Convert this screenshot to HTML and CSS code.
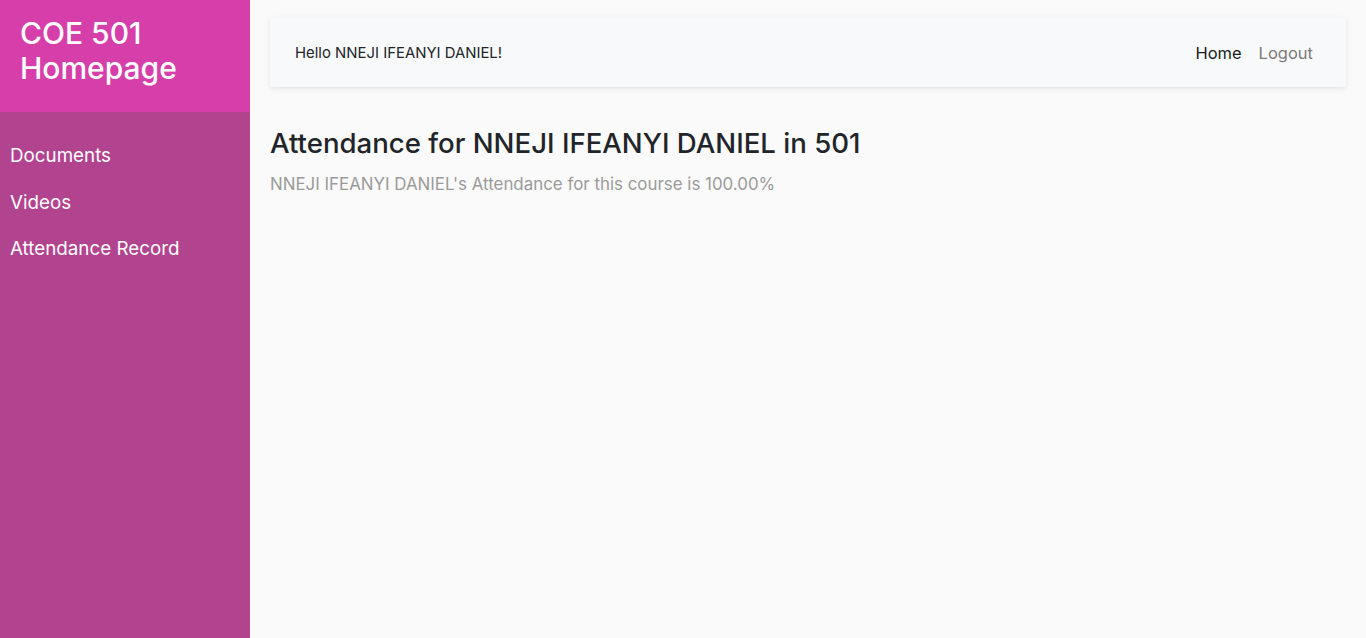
FILE: index.html
```html
<!DOCTYPE html>
<html lang="en">
<head>
<meta charset="utf-8">
<title>COE 501 Homepage</title>
<link rel="stylesheet" href="styles.css">
</head>
<body>
<div class="layout">
  <aside class="sidebar">
    <div class="brand">COE 501<br>Homepage</div>
    <ul class="side-nav">
      <li><a href="#">Documents</a></li>
      <li><a href="#">Videos</a></li>
      <li><a href="#">Attendance Record</a></li>
    </ul>
  </aside>
  <main class="content">
    <nav class="topbar">
      <span class="hello">Hello NNEJI IFEANYI DANIEL!</span>
      <div class="top-links">
        <a href="#" class="active">Home</a>
        <a href="#" class="muted">Logout</a>
      </div>
    </nav>
    <h2 class="title">Attendance for NNEJI IFEANYI DANIEL in 501</h2>
    <p class="summary">NNEJI IFEANYI DANIEL's Attendance for this course is 100.00%</p>
  </main>
</div>
</body>
</html>
```
FILE: styles.css
```css
html, body {
  margin: 0;
  padding: 0;
  height: 100%;
}
body {
  font-family: "Inter", "Noto Sans", sans-serif;
  background: #fafafa;
  color: #212529;
}
a { text-decoration: none; }
.layout {
  display: flex;
  min-height: 100vh;
}
.sidebar {
  width: 250px;
  flex: 0 0 250px;
  background: #b2438f;
  color: #fff;
}
.brand {
  height: 112px;
  box-sizing: border-box;
  background: #d63fa9;
  padding: 16px 20px 0 20px;
  font-size: 30px;
  font-weight: 500;
  line-height: 35px;
}
.side-nav {
  list-style: none;
  margin: 0;
  padding: 21px 0 0 0;
}
.side-nav li a {
  display: block;
  padding: 10px 10px;
  line-height: 26.5px;
  font-size: 18.8px;
  color: #fff;
}
.content {
  flex: 1;
  padding: 17px 20px 0 20px;
}
.topbar {
  height: 70px;
  box-sizing: border-box;
  background: #f8f9fa;
  box-shadow: 0 2px 5px rgba(0,0,0,0.09);
  display: flex;
  align-items: center;
  justify-content: space-between;
  padding: 2px 33px 0 25px;
}
.hello {
  font-size: 14.9px;
  color: #212529;
}
.top-links {
  display: flex;
  gap: 17px;
}
.top-links a {
  font-size: 16.5px;
}
.top-links .active { color: #1a1a1a; }
.top-links .muted { color: #7c7c7c; }
.title {
  margin: 39px 0 0 0;
  font-size: 27.6px;
  line-height: 34px;
  font-weight: 500;
  color: #212529;
}
.summary {
  margin: 12px 0 0 0;
  font-size: 16.9px;
  line-height: 24px;
  color: #9a9a9a;
}
```
